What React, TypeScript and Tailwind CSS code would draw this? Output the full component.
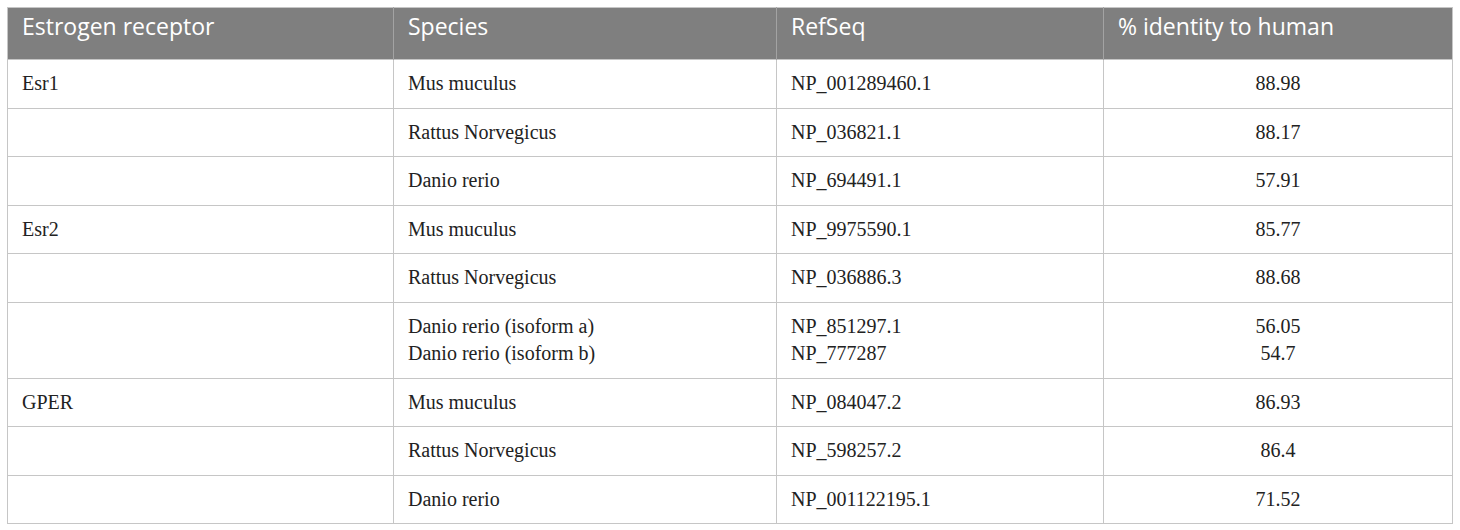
import React from "react";

type Row = { rec: string; species: string[]; ref: string[]; id: string[] };

const rows: Row[] = [
  { rec: "Esr1", species: ["Mus muculus"], ref: ["NP_001289460.1"], id: ["88.98"] },
  { rec: "", species: ["Rattus Norvegicus"], ref: ["NP_036821.1"], id: ["88.17"] },
  { rec: "", species: ["Danio rerio"], ref: ["NP_694491.1"], id: ["57.91"] },
  { rec: "Esr2", species: ["Mus muculus"], ref: ["NP_9975590.1"], id: ["85.77"] },
  { rec: "", species: ["Rattus Norvegicus"], ref: ["NP_036886.3"], id: ["88.68"] },
  {
    rec: "",
    species: ["Danio rerio (isoform a)", "Danio rerio (isoform b)"],
    ref: ["NP_851297.1", "NP_777287"],
    id: ["56.05", "54.7"],
  },
  { rec: "GPER", species: ["Mus muculus"], ref: ["NP_084047.2"], id: ["86.93"] },
  { rec: "", species: ["Rattus Norvegicus"], ref: ["NP_598257.2"], id: ["86.4"] },
  { rec: "", species: ["Danio rerio"], ref: ["NP_001122195.1"], id: ["71.52"] },
];

function Lines({ items }: { items: string[] }) {
  return (
    <>
      {items.map((t, i) => (
        <div key={i}>{t}</div>
      ))}
    </>
  );
}

export default function App() {
  const td =
    "border border-[#c6c6c6] pl-[14px] pr-2 py-[10px] leading-[27.5px] align-middle";
  const th =
    "border-x border-[#a3a3a3] first:border-l-[#c6c6c6] last:border-r-[#c6c6c6] pl-[14px] pt-[3px] pb-[18px] text-left font-normal leading-[30px]";
  return (
    <div className="w-[1460px] h-[530px] bg-white pt-[7px] pl-[7px]">
      <table
        className="table-fixed border-collapse w-[1445px] text-[#222222] text-[20px]"
        style={{ fontFamily: '"Liberation Serif", "Times New Roman", serif' }}
      >
        <colgroup>
          <col className="w-[386px]" />
          <col className="w-[383px]" />
          <col className="w-[327px]" />
          <col className="w-[349px]" />
        </colgroup>
        <thead>
          <tr
            className="bg-[#7f7f7f] text-white text-[23px] border-t border-[#c6c6c6]"
            style={{ fontFamily: '"Open Sans", "Noto Sans", sans-serif' }}
          >
            <th className={th}>Estrogen receptor</th>
            <th className={th}>Species</th>
            <th className={th}>RefSeq</th>
            <th className={th}>% identity to human</th>
          </tr>
        </thead>
        <tbody>
          {rows.map((r, i) => (
            <tr key={i}>
              <td className={td}>{r.rec}</td>
              <td className={td}>
                <Lines items={r.species} />
              </td>
              <td className={td}>
                <Lines items={r.ref} />
              </td>
              <td className={td + " text-center !pl-0 !pr-0"}>
                <Lines items={r.id} />
              </td>
            </tr>
          ))}
        </tbody>
      </table>
    </div>
  );
}
